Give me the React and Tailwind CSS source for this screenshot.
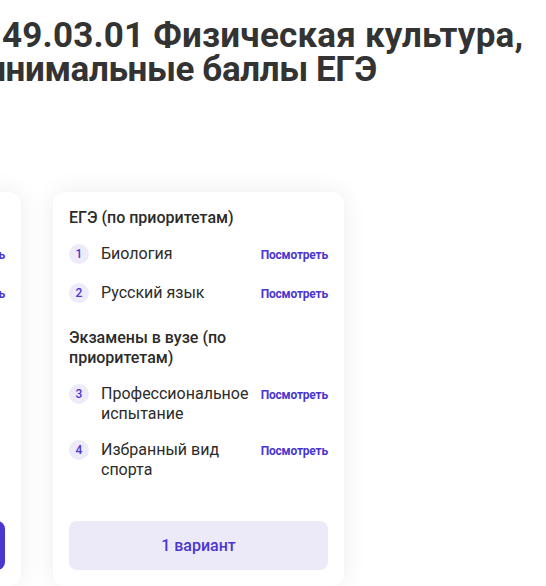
import React from "react";

const PURPLE = "text-[#4b36d0]";

function Item({ n, text, link = true }) {
  return (
    <div className="flex items-start justify-between gap-3">
      <div className="flex items-start gap-3 flex-1 min-w-0">
        <span className="w-5 h-5 shrink-0 rounded-full bg-[#edeafa] flex items-center justify-center text-[12px] font-medium text-[#4b36d0] leading-none">
          {n}
        </span>
        <span className="text-[16px] leading-5 text-[#2b2b2b]">{text}</span>
      </div>
      {link && (
        <a className={`shrink-0 text-[12px] font-bold leading-[23px] ${PURPLE} tracking-[-0.2px]`}>
          Посмотреть
        </a>
      )}
    </div>
  );
}

function Card({ children, solid, label }) {
  return (
    <div className="w-[291px] shrink-0 rounded-xl bg-white shadow-[0_0_24px_rgba(0,0,0,0.08)] px-4 pt-4 pb-4 flex flex-col">
      {children}
      <div className="mt-auto pt-[41px]">
        <button
          className={
            solid
              ? "w-full h-[49px] rounded-lg bg-[#4b36d0] text-white text-[16px] font-medium"
              : "w-full h-[49px] rounded-lg bg-[#eceaf8] text-[#4b36d0] text-[16px] font-medium"
          }
        >
          {label}
        </button>
      </div>
    </div>
  );
}

export default function App() {
  return (
    <div className="w-[546px] h-[586px] overflow-hidden bg-white font-['Roboto',sans-serif]">
      <h1 className="pt-[19px] text-[35px] leading-[34px] font-bold text-[#333333] whitespace-nowrap">
        <span className="block ml-[2px] tracking-[0.2px]">49.03.01 Физическая культура,</span>
        <span className="block ml-[-40px] tracking-[-0.4px]">минимальные баллы ЕГЭ</span>
      </h1>
      <div className="mt-[105px] ml-[-270px] flex gap-8 items-stretch">
        <Card solid label="2 вариант">
          <div className="text-[16px] leading-5 font-medium text-[#2b2b2b]">ЕГЭ (по приоритетам)</div>
          <div className="mt-4 flex flex-col gap-4">
            <Item n="1" text="Биология" />
            <Item n="2" text="Русский язык" />
          </div>
        </Card>
        <Card label="1 вариант">
          <div className="text-[16px] leading-5 font-medium text-[#2b2b2b]">ЕГЭ (по приоритетам)</div>
          <div className="mt-4 flex flex-col gap-4">
            <Item n="1" text="Биология" />
            <Item n="2" text="Русский язык" />
          </div>
          <div className="mt-[22px] text-[16px] leading-5 font-medium text-[#2b2b2b]">
            Экзамены в вузе (по приоритетам)
          </div>
          <div className="mt-4 flex flex-col gap-4">
            <Item n="3" text="Профессиональное испытание" />
            <Item n="4" text="Избранный вид спорта" />
          </div>
        </Card>
      </div>
    </div>
  );
}
